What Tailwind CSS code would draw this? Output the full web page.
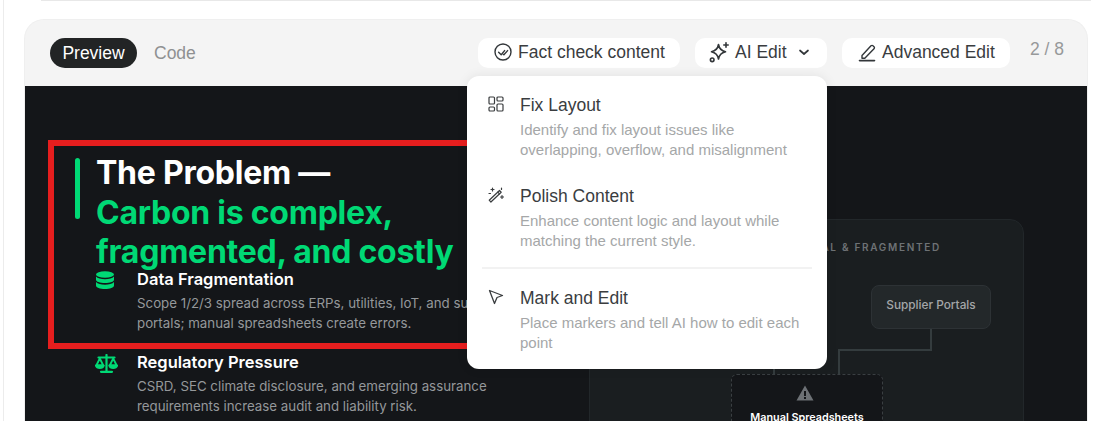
<!DOCTYPE html>
<html lang="en">
<head>
  <meta charset="UTF-8" />
  <title>Slide preview</title>
  <script src="https://cdn.jsdelivr.net/npm/@tailwindcss/browser@4"></script>
</head>
<body class="bg-white font-['Liberation_Sans',sans-serif] overflow-hidden h-[421px] w-[1110px]">
  <div class="relative h-[421px] overflow-hidden border-l border-[#ececec] ml-[3px] pl-[20px] pt-[19px]">
    <!-- top edge of the block above -->
    <div class="absolute left-[37px] top-0 h-px w-[1050px] bg-[#e8e8e8]"></div>

    <!-- Card -->
    <div class="w-[1064px] h-[500px] rounded-t-[20px] bg-[#f4f4f4] border border-[#efefef] border-b-0 overflow-hidden">
      <!-- Toolbar -->
      <div class="relative flex items-center h-[66px] pl-[25px]">
        <span class="flex items-center justify-center h-[30px] w-[87px] rounded-full bg-[#222425] text-white text-[17.5px]">Preview</span>
        <span class="ml-[17px] text-[17.5px] text-[#8f9192]">Code</span>
        <div class="absolute left-[453px] top-[18px] flex items-center">
          <button class="flex items-center gap-[5px] h-[30px] w-[202px] pl-[15px] pb-[2px] rounded-[10px] bg-white text-[17.5px] text-[#3a3d3f]">
            <svg class="w-[20px] h-[20px] shrink-0" viewBox="0 0 20 20" fill="none" stroke="#33373a" stroke-width="1.4" stroke-linecap="round" stroke-linejoin="round"><circle cx="10" cy="10" r="8"/><path d="M5.6 10.2l2.6 2.6 3.4-4.2M10.400 12.400l.5.400 3.700-4.200"/></svg>
            Fact check content
          </button>
          <button class="ml-[15px] flex items-center h-[30px] w-[132px] pl-[14px] pb-[2px] rounded-[10px] bg-white text-[17.5px] text-[#3a3d3f]">
            <svg class="w-[21px] h-[21px] shrink-0 mr-[5px]" viewBox="0 0 21 21" fill="none" stroke="#33373a" stroke-width="1.6" stroke-linecap="round" stroke-linejoin="round"><path d="M9.500 2.500c.7 4.200 2.600 6.200 7 7.200-4.400 1-6.300 3-7 7.300-.7-4.300-2.600-6.300-7-7.300 4.400-1 6.300-3 7-7.200z"/><path d="M17 .8v4.400M14.800 3h4.400"/><circle cx="3.200" cy="17.800" r="1.800"/></svg>
            AI Edit
            <svg class="w-[12px] h-[12px] ml-[11px]" viewBox="0 0 12 12" fill="none" stroke="#33373a" stroke-width="1.7" stroke-linecap="round" stroke-linejoin="round"><path d="M2 4.500L6 8l4-3.500"/></svg>
          </button>
          <button class="ml-[15px] flex items-center h-[30px] w-[168px] pl-[16px] pb-[2px] rounded-[10px] bg-white text-[17.5px] text-[#3a3d3f]">
            <svg class="w-[20px] h-[20px] shrink-0 mr-[4px]" viewBox="0 0 20 20" fill="none" stroke="#33373a" stroke-width="1.4" stroke-linecap="round" stroke-linejoin="round"><path d="M4 13.500L13 3.800c.6-.6 1.500-.6 2 0l1 1c.6.6.6 1.400 0 2l-9.200 9.400H4v-2.700z"/><path d="M1.500 18.600h15" stroke-width="1.600"/></svg>
            Advanced Edit
          </button>
          <span class="ml-[20px] -mt-[7px] text-[17.5px] text-[#97999a]">2 / 8</span>
        </div>
      </div>

      <!-- Slide -->
      <div class="relative h-[400px] bg-[#141619] text-white font-['Inter',sans-serif]">
        <div class="flex pt-[67px] pl-[50px]">
          <div class="w-[5px] h-[61px] mt-[5px] rounded-full bg-[#00d975]"></div>
          <h1 class="ml-[16px] text-[32px] leading-[39.5px] font-bold whitespace-nowrap tracking-[-0.25px]">The Problem —<br /><span class="text-[#00d975]">Carbon is complex,<br />fragmented, and costly</span></h1>
        </div>
        <div class="pl-[71px] mt-[-3px] flex flex-col gap-[18px]">
          <div class="flex">
            <svg class="w-[18px] h-[20px] mt-[2px] shrink-0" viewBox="0 0 18 20" fill="#00d975"><ellipse cx="9" cy="3.500" rx="9" ry="3.300"/><path d="M0 5.500v3.200C0 10.600 4 12 9 12s9-1.400 9-3.300V5.500C16.500 7.300 13 8.300 9 8.300S1.500 7.300 0 5.500z"/><path d="M0 11v3.500C0 16.600 4 18 9 18s9-1.400 9-3.500V11c-1.500 1.800-5 2.800-9 2.800S1.500 12.800 0 11z"/></svg>
            <div class="ml-[23px]">
              <p class="text-[16.5px] leading-[20px] font-semibold">Data Fragmentation</p>
              <p class="mt-[4px] w-[400px] text-[13.3px] leading-[20.5px] text-[#95989b]">Scope 1/2/3 spread across ERPs, utilities, IoT, and supplier portals; manual spreadsheets create errors.</p>
            </div>
          </div>
          <div class="flex">
            <svg class="w-[23px] h-[19px] mt-[2px] -ml-[1px] shrink-0" viewBox="0 0 23 19" fill="none" stroke="#00d975" stroke-width="1.800" stroke-linecap="round" stroke-linejoin="round"><path d="M11.500 1v16M6 17.800h11M3.500 3.500h16" stroke-width="2.200"/><path d="M4.800 4.500L1.300 11.500h7z"/><path d="M18.200 4.500l-3.500 7h7z"/><path d="M.8 11.500c1 3.400 7 3.400 8 0zM14.200 11.500c1 3.400 7 3.400 8 0z" fill="#00d975"/></svg>
            <div class="ml-[19px]">
              <p class="text-[16.5px] leading-[20px] font-semibold">Regulatory Pressure</p>
              <p class="mt-[4px] w-[400px] text-[13.3px] leading-[20.5px] text-[#95989b]">CSRD, SEC climate disclosure, and emerging assurance requirements increase audit and liability risk.</p>
            </div>
          </div>
        </div>

        <!-- Diagram panel -->
        <div class="absolute left-[564px] top-[133px] w-[435px] h-[300px] rounded-[14px] bg-[#1a1e20] border border-[#22272a]">
          <p class="absolute right-[82px] top-[20px] whitespace-nowrap text-[10px] font-semibold tracking-[1.7px] text-[#6e7275]">MANUAL &amp; FRAGMENTED</p>
          <div class="absolute left-[281px] top-[65px] w-[120px] h-[44px] rounded-[8px] bg-[#23282a] border border-[#2d3235] text-center pt-[11px] text-[11.8px] font-medium text-[#a3a6a8]">Supplier Portals</div>
          <div class="absolute left-[340px] top-[109px] w-[2px] h-[21px] bg-[#343c3e]"></div>
          <div class="absolute left-[248px] top-[129px] w-[94px] h-[2px] bg-[#343c3e]"></div>
          <div class="absolute left-[248px] top-[129px] w-[2px] h-[26px] bg-[#343c3e]"></div>
          <div class="absolute left-[183px] top-[140px] w-[2px] h-[15px] bg-[#343c3e]"></div>
          <div class="absolute left-[141px] top-[154px] w-[152px] h-[100px] rounded-[6px] bg-[#141619] border border-dashed border-[#3a3f42] text-center">
            <svg class="ml-[64px] mt-[10px] w-[18px] h-[16px]" viewBox="0 0 18 16" fill="#6d7175"><path d="M9 .5L.5 15.500h17zM8 6h2v5H8zm0 6h2v2H8z" fill-rule="evenodd"/></svg>
            <p class="mt-[9px] text-[10.8px] font-semibold text-white">Manual Spreadsheets</p>
          </div>
        </div>
      </div>
    </div>

    <!-- Red highlight -->
    <div class="absolute left-[44px] top-[140px] w-[426px] h-[209px] border-[6px] border-[#e61e1e]"></div>

    <!-- AI Edit menu -->
    <div class="absolute left-[463px] top-[76px] w-[360px] h-[293px] rounded-[12px] bg-white shadow-[0_0_12px_rgba(0,0,0,0.08)] pt-[18px]">
      <div class="flex pl-[21px]">
        <svg class="w-[16px] h-[16px] mt-[2px] shrink-0" viewBox="0 0 16 16" fill="none" stroke="#3a3d3f" stroke-width="1.200"><rect x="1" y="1" width="5.500" height="7" rx="1"/><rect x="9" y="1" width="6" height="4" rx="1"/><rect x="1" y="11" width="5.500" height="4" rx="1"/><rect x="9" y="8" width="6" height="7" rx="1"/></svg>
        <div class="ml-[16px]">
          <p class="text-[17.5px] leading-[22px] text-[#3a3d3f]">Fix Layout</p>
          <p class="mt-[4px] w-[290px] text-[15px] leading-[20px] text-[#a5a7a8]">Identify and fix layout issues like overlapping, overflow, and misalignment</p>
        </div>
      </div>
      <div class="flex pl-[21px] mt-[25px]">
        <svg class="w-[16px] h-[16px] mt-[2px] shrink-0" viewBox="0 0 16 16" fill="none" stroke="#3a3d3f" stroke-width="1.200" stroke-linecap="round" stroke-linejoin="round"><path d="M1.200 13.200L11.500 3.500l1.700 1.700L2.900 15z"/><path d="M9.800 5.200l1.700 1.700"/><path d="M4.500 1v3M3 2.500h3M14 8.500v3M12.500 10h3M1 6.500h1.500M13.500 1v1.500"/></svg>
        <div class="ml-[16px]">
          <p class="text-[17.5px] leading-[22px] text-[#3a3d3f]">Polish Content</p>
          <p class="mt-[4px] w-[290px] text-[15px] leading-[20px] text-[#a5a7a8]">Enhance content logic and layout while matching the current style.</p>
        </div>
      </div>
      <div class="mx-[15px] mt-[16px] h-[2px] bg-[#f2f2f2]"></div>
      <div class="flex pl-[21px] mt-[18px]">
        <svg class="w-[16px] h-[16px] mt-[2px] shrink-0" viewBox="0 0 16 16" fill="none" stroke="#3a3d3f" stroke-width="1.300" stroke-linejoin="round"><path d="M1.500 1.500L14.500 6.500l-5.500 2-2.500 6z"/></svg>
        <div class="ml-[16px]">
          <p class="text-[17.5px] leading-[22px] text-[#3a3d3f]">Mark and Edit</p>
          <p class="mt-[4px] w-[290px] text-[15px] leading-[20px] text-[#a5a7a8]">Place markers and tell AI how to edit each point</p>
        </div>
      </div>
    </div>
  </div>
</body>
</html>
